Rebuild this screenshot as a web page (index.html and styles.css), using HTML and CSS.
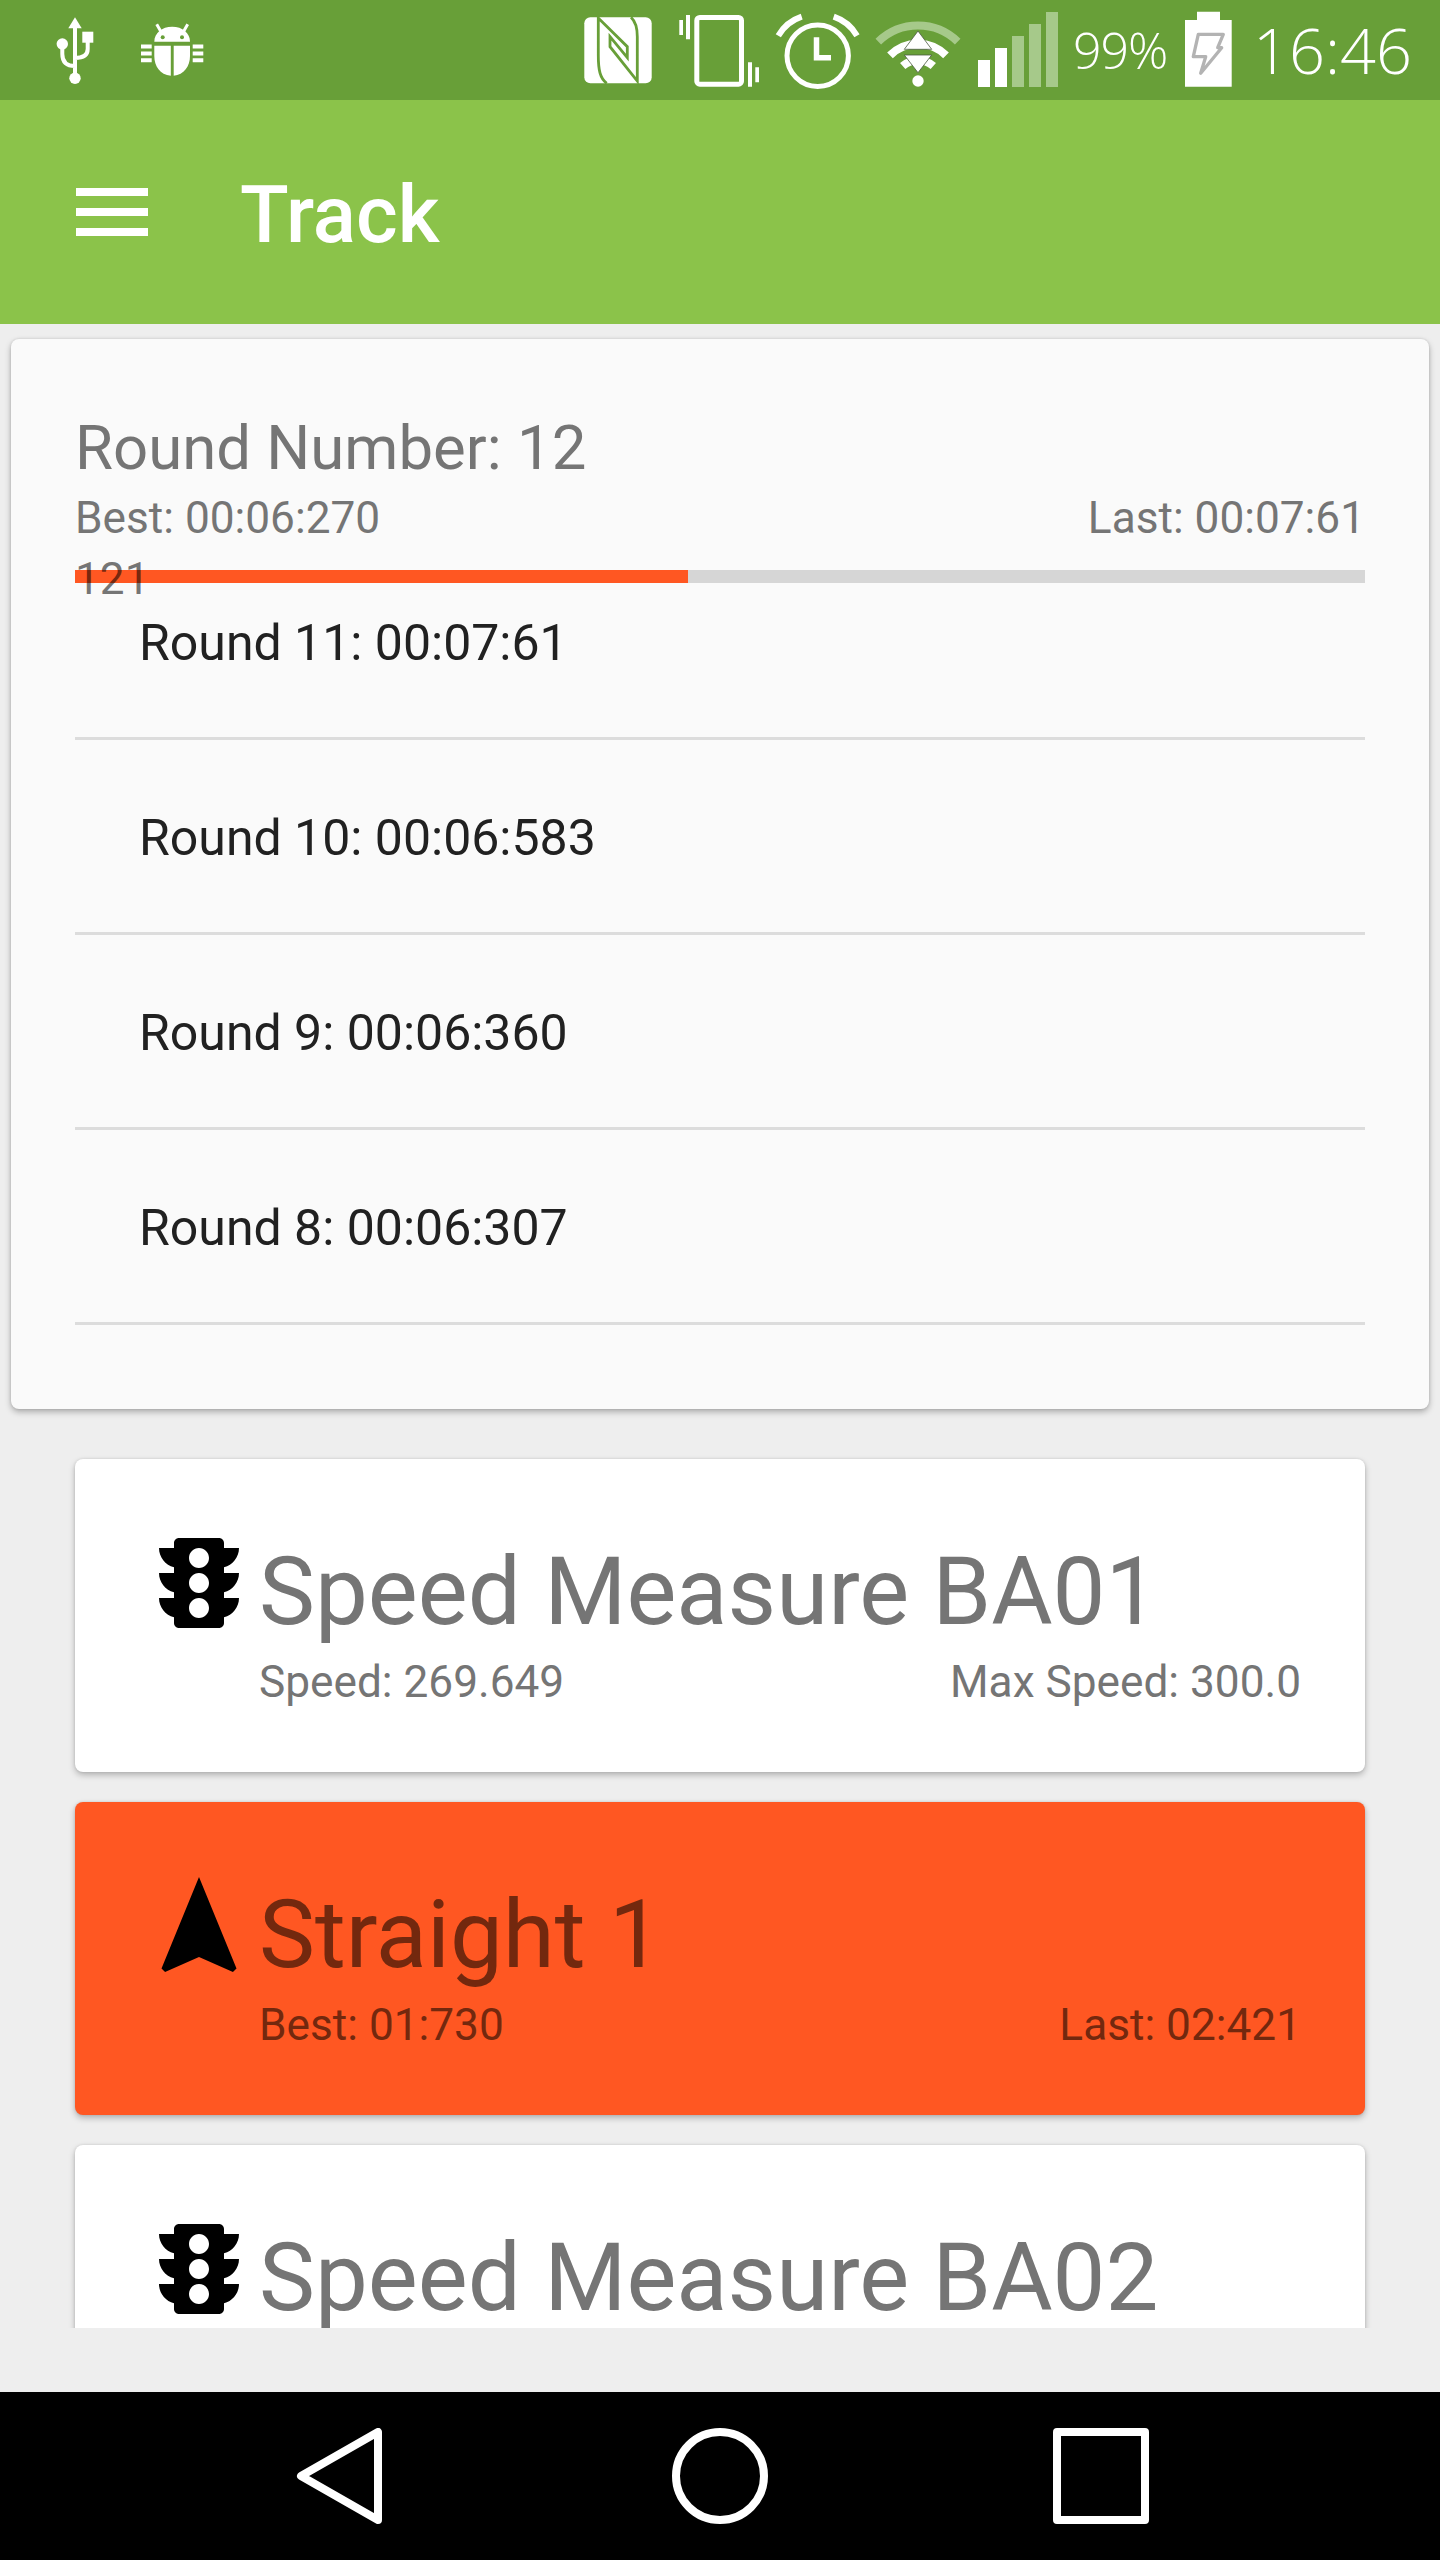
FILE: index.html
```html
<!DOCTYPE html>
<html lang="en">
<head>
<meta charset="utf-8">
<title>Track</title>
<link rel="stylesheet" href="styles.css">
</head>
<body>
<div class="app">
  <header class="status-bar">
    <svg class="status-left" viewBox="40 0 180 100" width="180" height="100">
      <path class="wf" d="M75 17.3 81.700 28.300H68.300Z"/>
      <circle class="wf" cx="75" cy="78.3" r="5.7"/>
      <circle class="wf" cx="62.3" cy="44" r="5.7"/>
      <rect class="wf" x="82.3" y="31.7" width="11" height="11"/>
      <path class="ws" stroke-width="4" d="M75 26V76M62.3 44V54Q62.3 66 75 66M87.7 42V49Q87.7 58 75 58"/>
      <path class="wf" d="M154.300 41.700C154.300 33 162 26.700 172.200 26.700S190 33 190 41.700Z"/>
      <path class="ws" stroke-width="3" d="M156.700 24.300 161.700 33M187.700 24.300 182.700 33"/>
      <circle class="gf" cx="162.7" cy="37.3" r="2"/>
      <circle class="gf" cx="182" cy="37.3" r="2"/>
      <path class="wf" d="M154.300 45.700H170.800V75.700C160 75 154.300 66 154.300 56ZM190 45.700H173.700V75.700C184 75 190 66 190 56Z"/>
      <path class="wf" d="M141 44.500H151.700V48.500H141ZM141 51.500H151.700V55.500H141ZM141 58.300H151.700V62.300H141ZM192.700 44.500H203.300V48.500H192.700ZM192.700 51.500H203.300V55.500H192.700ZM192.700 58.300H203.300V62.300H192.700Z"/>
    </svg>
    <svg class="status-icons" viewBox="575 0 490 100" width="490" height="100">
      <rect class="wf" x="584.3" y="17.3" width="67.4" height="66" rx="6"/>
      <path class="gs" stroke-width="2.8" d="M606.700 83.300C600 78.300 598.300 70 598.300 55V18L627.300 46.700V57.700L610 36.700V46.700L637.300 81V36.700C637.300 28.300 635.700 21.700 631 17.300"/>
      <rect class="ws" stroke-width="5" x="696.8" y="17.5" width="44.7" height="66.7" rx="3"/>
      <path class="wf" d="M679.300 20H683V35H679.300ZM686 15H690V39.300H686ZM748 62.300H752V86.700H748ZM755.300 67.300H759V82.300H755.300Z"/>
      <circle class="ws" stroke-width="5" cx="817.7" cy="55.7" r="30.7"/>
      <path class="ws" stroke-width="5.5" d="M816.500 37.300V57.700H831"/>
      <path class="ws" stroke-width="6" d="M778.300 35.700A43 43 0 0 1 801.700 16.700M857 35.700A43 43 0 0 0 833.700 16.700"/>
      <path class="dim-s" stroke-width="8" d="M878.300 41.700A57 57 0 0 1 957.700 41.700"/>
      <path class="ws" stroke-width="8" d="M890 55.400A39.300 39.300 0 0 1 946 55.400M902.700 66A23 23 0 0 1 933.300 66"/>
      <circle class="wf" cx="918" cy="81" r="5.7"/>
      <path class="wifi-arrow" d="M918 31 931.700 49.300H904.300ZM904.300 55H931.700L918 72.700Z"/>
      <path class="wf" d="M978 60H990V87H978ZM995 48H1007V87H995Z"/>
      <path class="dim-f" d="M1012 36H1024V87H1012ZM1029 24H1041V87H1029ZM1046 12H1058V87H1046Z"/>
    </svg>
    <span class="status-pct">99%</span>
    <svg class="status-battery" viewBox="1185 0 47 100" width="47" height="100">
      <path class="wf" d="M1197 11.700H1220V20H1231.700V86.700H1185V20H1197Z"/>
      <path class="bolt" d="M1198.300 34.300H1223.300L1217.700 47.700H1221.700L1200.700 73.300 1205.700 56.700H1193.300Z"/>
    </svg>
    <span class="status-time">16:46</span>
  </header>

  <div class="toolbar">
    <svg class="menu-icon" viewBox="0 0 72 48" width="72" height="48">
      <path class="wf" d="M0 0H72V8H0ZM0 20H72V28H0ZM0 40H72V48H0Z"/>
    </svg>
    <h1 class="toolbar-title">Track</h1>
  </div>

  <section class="round-card">
    <div class="round-number">Round Number: 12</div>
    <div class="split-row">
      <span>Best: 00:06:270</span>
      <span>Last: 00:07:61</span>
    </div>
    <div class="progress">
      <div class="progress-fill" style="width:47.5%"></div>
      <span class="progress-label">121</span>
    </div>
    <ul class="round-list">
      <li class="round-row">Round 11: 00:07:61</li>
      <li class="round-row">Round 10: 00:06:583</li>
      <li class="round-row">Round 9: 00:06:360</li>
      <li class="round-row">Round 8: 00:06:307</li>
    </ul>
  </section>

  <div class="sector-scroll">
    <article class="sector">
      <svg class="sector-icon" viewBox="0 0 24 24" width="120" height="120"><path d="M20 10h-3V8.860c1.720-.45 3-2 3-3.860h-3V4c0-.55-.45-1-1-1H8c-.55 0-1 .45-1 1v1H4c0 1.860 1.280 3.410 3 3.860V10H4c0 1.860 1.280 3.410 3 3.860V15H4c0 1.860 1.280 3.410 3 3.860V20c0 .55.45 1 1 1h8c.55 0 1-.45 1-1v-1.140c1.720-.45 3-2 3-3.860h-3v-1.140c1.720-.45 3-2 3-3.860zm-8 9c-1.110 0-2-.9-2-2s.89-2 2-2c1.100 0 2 .9 2 2s-.89 2-2 2zm0-5c-1.110 0-2-.9-2-2s.89-2 2-2c1.100 0 2 .9 2 2s-.89 2-2 2zm0-5c-1.110 0-2-.9-2-2 0-1.110.89-2 2-2 1.100 0 2 .89 2 2 0 1.100-.89 2-2 2z"/></svg>
      <div class="sector-body">
        <div class="sector-title">Speed Measure BA01</div>
        <div class="split-row">
          <span>Speed: 269.649</span>
          <span>Max Speed: 300.0</span>
        </div>
      </div>
    </article>
    <article class="sector sector-active">
      <svg class="sector-icon" viewBox="0 0 24 24" width="120" height="120"><path d="M12 2 4.500 20.290l.71.71L12 18l6.790 3 .71-.71z"/></svg>
      <div class="sector-body">
        <div class="sector-title">Straight 1</div>
        <div class="split-row">
          <span>Best: 01:730</span>
          <span>Last: 02:421</span>
        </div>
      </div>
    </article>
    <article class="sector">
      <svg class="sector-icon" viewBox="0 0 24 24" width="120" height="120"><path d="M20 10h-3V8.860c1.720-.45 3-2 3-3.860h-3V4c0-.55-.45-1-1-1H8c-.55 0-1 .45-1 1v1H4c0 1.860 1.280 3.410 3 3.860V10H4c0 1.860 1.280 3.410 3 3.860V15H4c0 1.860 1.280 3.410 3 3.860V20c0 .55.45 1 1 1h8c.55 0 1-.45 1-1v-1.140c1.720-.45 3-2 3-3.860h-3v-1.140c1.720-.45 3-2 3-3.860zm-8 9c-1.110 0-2-.9-2-2s.89-2 2-2c1.100 0 2 .9 2 2s-.89 2-2 2zm0-5c-1.110 0-2-.9-2-2s.89-2 2-2c1.100 0 2 .9 2 2s-.89 2-2 2zm0-5c-1.110 0-2-.9-2-2 0-1.110.89-2 2-2 1.100 0 2 .89 2 2 0 1.100-.89 2-2 2z"/></svg>
      <div class="sector-body">
        <div class="sector-title">Speed Measure BA02</div>
      </div>
    </article>
  </div>

  <nav class="nav-bar">
    <svg viewBox="0 0 96 96" width="96" height="96"><path class="nav-stroke" d="M87 4V92L10 48Z"/></svg>
    <svg viewBox="0 0 96 96" width="96" height="96"><circle class="nav-stroke" cx="48" cy="48" r="44"/></svg>
    <svg viewBox="0 0 96 96" width="96" height="96"><rect class="nav-stroke" x="4" y="4" width="88" height="88"/></svg>
  </nav>
</div>
</body>
</html>
```
FILE: styles.css
```css
* { box-sizing: border-box; }
html, body { margin: 0; padding: 0; }
body { font-family: Roboto, "Liberation Sans", sans-serif; background: #eeeeee; }
.app { width: 1440px; height: 2560px; display: flex; flex-direction: column; overflow: hidden; background: #eeeeee; }

/* status bar */
.status-bar { height: 100px; flex: none; display: flex; align-items: center; background: #689f38; color: #fff; font-family: "Open Sans", sans-serif; font-weight: 300; padding-left: 40px; }
.status-left { flex: none; margin-right: 355px; }
.status-icons, .status-battery { flex: none; }
.status-pct { width: 120px; padding-left: 8px; font-size: 50px; letter-spacing: -1px; line-height: 100px; }
.status-time { margin-left: 21px; font-size: 63px; line-height: 100px; }
.wf { fill: #fff; }
.ws { fill: none; stroke: #fff; }
.gf { fill: #689f38; }
.gs { fill: none; stroke: #689f38; }
.dim-f { fill: #a6c98a; }
.dim-s { fill: none; stroke: #a6c98a; }
.wifi-arrow { fill: #fff; stroke: #4a5a40; stroke-width: .8; }
.bolt { fill: #fff; stroke: #b3b3b3; stroke-width: 3.3; stroke-linejoin: round; }

/* toolbar */
.toolbar { height: 224px; flex: none; display: flex; align-items: center; background: #8bc34a; padding-left: 76px; }
.menu-icon { flex: none; margin-right: 92px; }
.toolbar-title { margin: 6px 0 0; font-size: 80px; font-weight: 500; color: #fff; line-height: 94px; }

/* round card */
.round-card { flex: none; height: 1070px; margin: 15px 11px 0; padding: 72px 64px 0; background: #fafafa; border-radius: 8px; box-shadow: 0 3px 6px rgba(0,0,0,.28), 0 0 3px rgba(0,0,0,.12); position: relative; }
.round-number { font-size: 61.7px; line-height: 75px; color: #757575; }
.split-row { display: flex; justify-content: space-between; font-size: 44.2px; line-height: 56px; color: #757575; }
.round-number + .split-row { margin-top: 4px; }
.progress { position: relative; height: 13px; margin-top: 24px; background: #d6d6d6; }
.progress-fill { height: 100%; background: #ff5722; }
.progress-label { position: absolute; left: 0; top: -19px; font-size: 44.2px; line-height: 56px; color: rgba(0,0,0,.54); }
.round-list { list-style: none; margin: -38px 0 0; padding: 0; }
.round-row { height: 195px; display: flex; align-items: center; padding: 3px 0 0 64px; border-bottom: 3px solid #dcdcdc; font-size: 50px; color: #212121; }

/* sectors */
.sector-scroll { flex: 1; margin: 31px 0 64px; padding: 19px 75px 0; overflow: hidden; }
.sector { height: 313px; margin-bottom: 30px; padding: 64px 64px 0; display: flex; background: #fff; border-radius: 8px; box-shadow: 0 3px 6px rgba(0,0,0,.25), 0 0 3px rgba(0,0,0,.1); }
.sector-icon { flex: none; }
.sector-body { flex: 1; padding-top: 13px; }
.sector-title { font-size: 94.2px; line-height: 112px; color: #757575; margin-bottom: 6px; }
.sector-active { background: #ff5722; padding-top: 65px; }
.sector-active .sector-body { padding-top: 12px; }
.sector-active .sector-title, .sector-active .split-row { color: #73280e; }

/* nav */
.nav-bar { height: 168px; flex: none; display: flex; align-items: center; justify-content: center; gap: 285px; background: #000; }
.nav-stroke { fill: none; stroke: #fff; stroke-width: 8; stroke-linejoin: round; }
```
